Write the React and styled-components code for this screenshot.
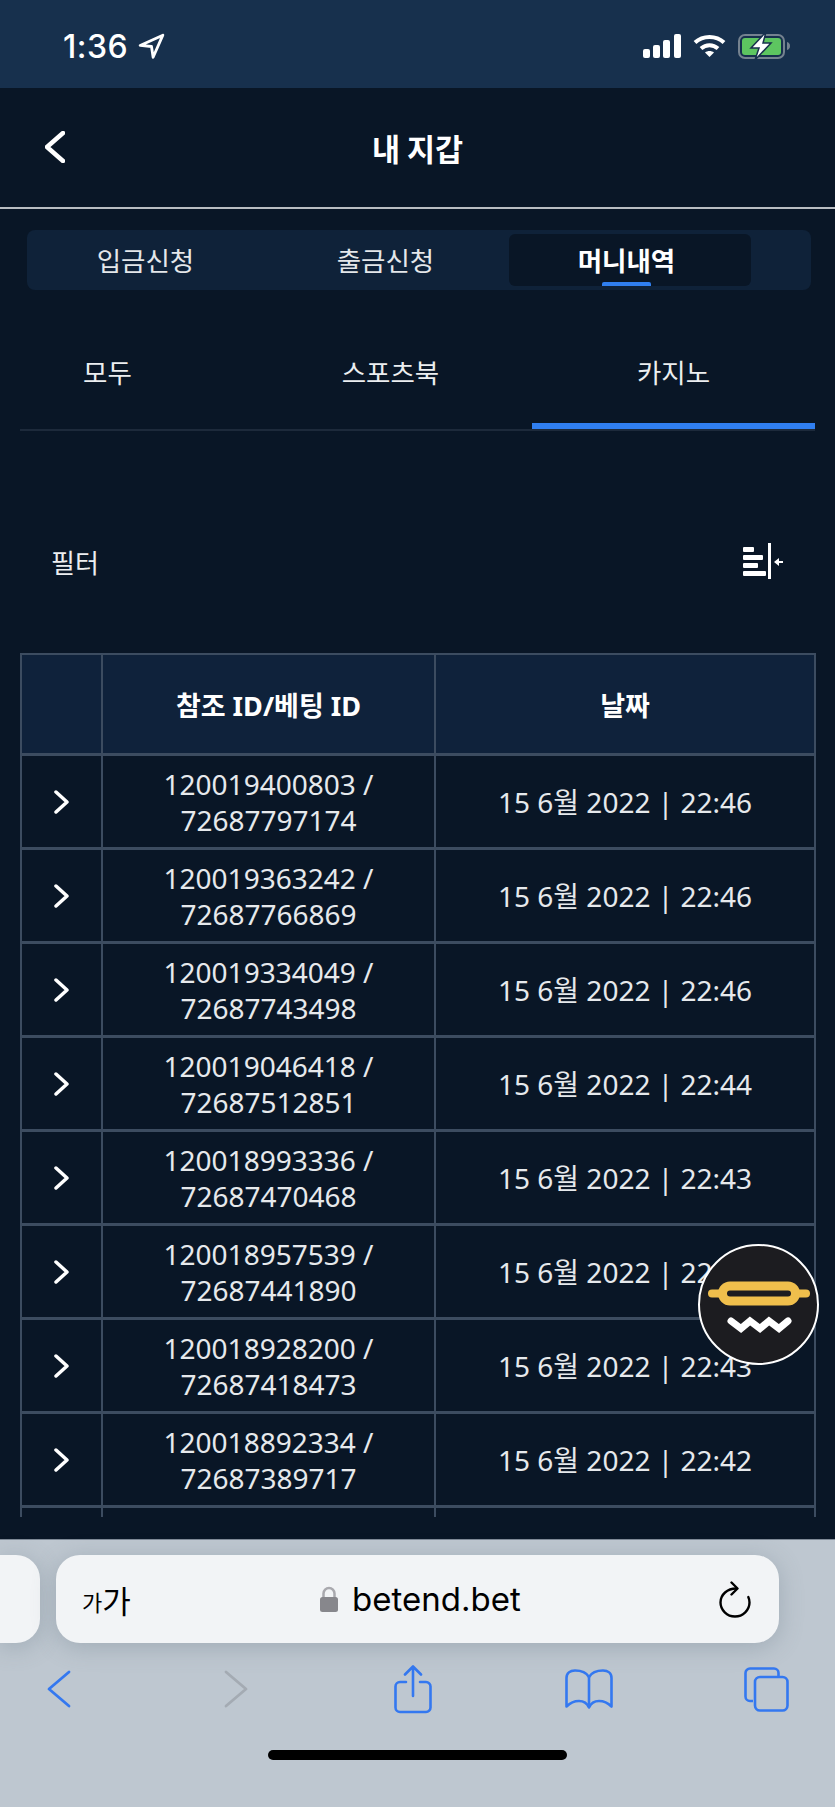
import React from 'react'
import styled, { createGlobalStyle } from 'styled-components'

const GlobalStyle = createGlobalStyle`
  html, body {
    margin: 0;
    padding: 0;
    background: #091626;
  }
  * {
    box-sizing: border-box;
  }
`

const Page = styled.div`
  position: relative;
  width: 835px;
  height: 1807px;
  overflow: hidden;
  background: #091626;
  color: #fff;
  font-family: "Noto Sans", "Noto Sans CJK KR", sans-serif;
  display: flex;
  flex-direction: column;
`
const StatusBar = styled.div`
  height: 88px;
  flex: none;
  background: #17304d;
  display: flex;
  align-items: center;
  justify-content: space-between;
  padding: 4px 43px 0 63px;
`
const Clock = styled.div`
  display: flex;
  align-items: center;
  gap: 10px;
  font-family: Inter, sans-serif;
  font-size: 32px;
  font-weight: 500;
  letter-spacing: 0.5px;
`
const StatusIcons = styled.div`
  display: flex;
  align-items: center;
  gap: 12px;
`
const Header = styled.header`
  height: 121px;
  flex: none;
  position: relative;
  display: flex;
  align-items: center;
  justify-content: center;
  border-bottom: 2px solid #b9bdc2;
`
const BackButton = styled.div`
  position: absolute;
  left: 45px;
  top: 43px;
  display: flex;
`
const Title = styled.h1`
  margin: 0;
  font-family: "Noto Sans CJK KR", sans-serif;
  font-size: 30.5px;
  font-weight: 700;
`
const PrimaryTabs = styled.div`
  height: 60px;
  flex: none;
  margin: 21px 24px 0 27px;
  padding: 4px 0;
  background: #0f2239;
  border-radius: 8px;
  display: flex;
`
const PrimaryTab = styled.div`
  position: relative;
  width: ${p => (p.$active ? '242px' : '240px')};
  margin-left: ${p => (p.$active ? '2px' : '0')};
  padding-right: ${p => (p.$active ? '7px' : '3px')};
  padding-bottom: 2px;
  display: flex;
  align-items: center;
  justify-content: center;
  font-family: "Noto Sans CJK KR", sans-serif;
  font-size: 26.5px;
  font-weight: ${p => (p.$active ? 700 : 400)};
  color: ${p => (p.$active ? '#fff' : '#e4e7ea')};
  background: ${p => (p.$active ? '#091626' : 'transparent')};
  border-radius: 6px;
`
const ActiveMark = styled.span`
  position: absolute;
  left: 93px;
  bottom: 0;
  width: 49px;
  height: 4px;
  border-radius: 2px 2px 0 0;
  background: #307ff0;
`
const SecondaryTabs = styled.div`
  height: 81px;
  flex: none;
  margin: 60px 20px 0;
  border-bottom: 2px solid #1d2a3b;
  display: flex;
  justify-content: flex-end;
  overflow: hidden;
`
const SecondaryTab = styled.div`
  flex: none;
  width: 283px;
  height: 79px;
  padding-bottom: 30px;
  display: flex;
  align-items: center;
  justify-content: center;
  font-family: "Noto Sans CJK KR", sans-serif;
  font-size: 26.5px;
  color: #eceef0;
  border-bottom: 6px solid ${p => (p.$active ? '#307ff0' : 'transparent')};
`
const FilterRow = styled.div`
  height: 40px;
  flex: none;
  margin-top: 110px;
  padding: 0 52px 0 51px;
  display: flex;
  align-items: center;
  justify-content: space-between;
  font-family: "Noto Sans CJK KR", sans-serif;
  font-size: 26px;
  color: #eceef0;
`
const TableClip = styled.div`
  height: 864px;
  flex: none;
  margin: 72px 19px 0 20px;
  overflow: hidden;
`
const Table = styled.table`
  width: 796px;
  table-layout: fixed;
  border-collapse: separate;
  border-spacing: 0;
`
const HeadCell = styled.th`
  height: 100px;
  padding: 0;
  background: #0f223b;
  border: solid #3c4c60;
  border-width: 2px 2px 0 0;
  &:first-child {
    border-left-width: 2px;
  }
  font-size: 27px;
  font-weight: 700;
  color: #fff;
`
const Cell = styled.td`
  height: 94px;
  padding: 0;
  border: solid #3c4c60;
  border-width: 3px 2px 0 0;
  &:first-child {
    border-left-width: 2px;
  }
  text-align: center;
  font-size: 28px;
  line-height: 36px;
  color: #e6e9ec;
`
const Expander = styled.div`
  display: flex;
  justify-content: center;
`
const Spacer = styled.div`
  flex: 1;
`
const BrowserBar = styled.div`
  height: 268px;
  flex: none;
  background: #bec7d0;
  border-top: 1px solid #7f8a97;
  display: flex;
  flex-direction: column;
`
const AddressRow = styled.div`
  margin-top: 15px;
  display: flex;
  gap: 16px;
  height: 88px;
`
const TabStub = styled.div`
  width: 40px;
  background: #f2f4f6;
  border-radius: 0 24px 24px 0;
  box-shadow: 0 4px 24px rgba(90, 105, 120, 0.3);
`
const AddressBar = styled.div`
  position: relative;
  width: 723px;
  padding: 0 28px 0 26px;
  background: #f2f4f6;
  border-radius: 24px;
  box-shadow: 0 4px 24px rgba(90, 105, 120, 0.3);
  display: flex;
  align-items: center;
  justify-content: space-between;
  color: #000;
`
const TextSize = styled.div`
  display: flex;
  align-items: center;
  font-family: "Noto Sans CJK KR", sans-serif;
`
const SmallGlyph = styled.span`
  font-size: 22px;
  margin-top: 4px;
`
const BigGlyph = styled.span`
  font-size: 31px;
`
const Domain = styled.div`
  display: flex;
  align-items: center;
  gap: 13px;
  font-family: Inter, sans-serif;
  font-size: 33px;
  margin-right: 10px;
`
const NavRow = styled.div`
  margin-top: 21px;
  padding: 0 39px 0 29px;
  height: 50px;
  display: flex;
  justify-content: space-between;
  align-items: center;
`
const NavSlot = styled.div`
  width: 60px;
  display: flex;
  justify-content: center;
`
const HomeIndicator = styled.div`
  width: 299px;
  height: 10px;
  margin: 36px auto 0;
  border-radius: 5px;
  background: #000;
`
const ChatBubble = styled.div`
  position: absolute;
  left: 698px;
  top: 1244px;
  width: 121px;
  height: 121px;
  display: flex;
`

const rows = [
  ['120019400803', '72687797174', '22:46'],
  ['120019363242', '72687766869', '22:46'],
  ['120019334049', '72687743498', '22:46'],
  ['120019046418', '72687512851', '22:44'],
  ['120018993336', '72687470468', '22:43'],
  ['120018957539', '72687441890', '22:43'],
  ['120018928200', '72687418473', '22:43'],
  ['120018892334', '72687389717', '22:42'],
  ['', '', ''],
]

const LocationArrow = () => (
  <svg width="27" height="27" viewBox="0 0 25 25" fill="none">
    <path d="M23 2L2 11.5l10.5 1 1.5 10L23 2z" stroke="#fff" strokeWidth="2.6" strokeLinejoin="round" />
  </svg>
)

const Signal = () => (
  <svg width="38" height="24" viewBox="0 0 38 24" fill="#fff">
    <rect x="0" y="15" width="7" height="9" rx="2" />
    <rect x="10" y="11" width="7" height="13" rx="2" />
    <rect x="20" y="6" width="7" height="18" rx="2" />
    <rect x="31" y="0" width="7" height="24" rx="2" />
  </svg>
)

const Wifi = () => (
  <svg width="33" height="24" viewBox="0 0 33 24" fill="none" stroke="#fff" strokeWidth="4">
    <path d="M2 8.5C10 1 23 1 31 8.5" />
    <path d="M8 14.5c5-4.500 12-4.500 17 0" />
    <path d="M16.500 23l-4.500-4.500c2.500-2 6.500-2 9 0z" fill="#fff" stroke="none" />
  </svg>
)

const Battery = () => (
  <svg width="54" height="28" viewBox="0 0 54 28" fill="none">
    <rect x="1" y="3" width="45" height="23" rx="6" stroke="#75828f" strokeWidth="2" />
    <rect x="4" y="6" width="39" height="17" rx="3" fill="#5dc560" />
    <path d="M49 10c2 .5 3 2 3 4s-1 3.500-3 4z" fill="#75828f" />
    <path d="M28 0L13 16h8l-4 12 16-17h-8l3-11z" fill="#fff" stroke="#17304d" strokeWidth="1.5" />
  </svg>
)

const Chevron = ({ dir = 'left', w = 20, h = 32, color = '#fff', sw = 4 }) => (
  <svg width={w} height={h} viewBox={`0 0 ${w} ${h}`} fill="none">
    <path
      d={dir === 'left'
        ? `M${w - 2} 2L2 ${h / 2}l${w - 4} ${h / 2 - 2}`
        : `M2 2l${w - 4} ${h / 2 - 2}L2 ${h - 2}`}
      stroke={color}
      strokeWidth={sw}
      strokeLinecap="round"
      strokeLinejoin="round"
    />
  </svg>
)

const CollapseIcon = () => (
  <svg width="40" height="36" viewBox="0 0 40 36" fill="#fff">
    <rect x="0" y="4" width="11" height="5" rx="1" />
    <rect x="0" y="12" width="20" height="5" rx="1" />
    <rect x="0" y="20" width="15" height="5" rx="1" />
    <rect x="0" y="28" width="23" height="5" rx="1" />
    <rect x="25" y="0" width="3" height="36" />
    <path d="M31 19l5-4v3h4v2h-4v3z" />
  </svg>
)

const Lock = () => (
  <svg width="20" height="26" viewBox="0 0 20 26" fill="none">
    <path d="M4.500 12V7.500a5.500 5.500 0 0 1 11 0V12" stroke="#a9a9ae" strokeWidth="2.500" />
    <rect x="1" y="11" width="18" height="15" rx="2.500" fill="#87878c" />
  </svg>
)

const Reload = () => (
  <svg width="32" height="37" viewBox="0 0 32 37" fill="none" stroke="#000" strokeWidth="2.400" strokeLinecap="round" strokeLinejoin="round">
    <path d="M17 7.500C8.500 7.500 1.500 13.500 1.500 21.500c0 7.500 6.500 14 14.500 14s14.500-6.500 14.500-14c0-2-.4-3.800-1.200-5.500" />
    <path d="M12.500 1.500l6 6-6 6" />
  </svg>
)

const Share = () => (
  <svg width="38" height="49" viewBox="0 0 38 49" fill="none" stroke="#3478f0" strokeWidth="2.600" strokeLinecap="round" strokeLinejoin="round">
    <path d="M12 17H6a4.500 4.500 0 0 0-4.500 4.500v21A4.500 4.500 0 0 0 6 47h26a4.500 4.500 0 0 0 4.500-4.500v-21A4.500 4.500 0 0 0 32 17h-6" />
    <path d="M19 31V2M11 9.500L19 1.500l8 8" />
  </svg>
)

const Book = () => (
  <svg width="48" height="40" viewBox="0 0 48 40" fill="none" stroke="#3478f0" strokeWidth="2.600" strokeLinejoin="round">
    <path d="M24 8C21 3 16 1.500 10 1.500 5 1.500 1.500 4 1.500 9v28.500C6 33 10 32 14 32c4 0 8 2 10 6.500C26 34 30 32 34 32c4 0 8 1 12.500 5.500V9c0-5-3.500-7.500-8.500-7.500C32 1.500 27 3 24 8z" />
    <path d="M24 8v30" />
  </svg>
)

const Tabs = () => (
  <svg width="45" height="45" viewBox="0 0 45 45" fill="none" stroke="#3478f0" strokeWidth="2.600">
    <path d="M9 34H6a4.500 4.500 0 0 1-4.500-4.500V6A4.500 4.500 0 0 1 6 1.500h24A4.500 4.500 0 0 1 34.500 6v3" />
    <rect x="11" y="10" width="32.500" height="33.500" rx="5" />
  </svg>
)

const BubbleLogo = () => (
  <svg width="121" height="121" viewBox="0 0 121 121">
    <circle cx="60.500" cy="60.500" r="59.500" fill="#1c1c20" stroke="#fff" strokeWidth="2" />
    <rect x="10" y="45.500" width="102" height="8" rx="4" fill="#f0bf4c" />
    <rect x="20" y="37.500" width="82" height="24" rx="12" fill="#f0bf4c" />
    <rect x="29" y="46.500" width="64" height="6" rx="3" fill="#1c1c20" />
    <path d="M33 77l10 7.500 9-7.500 10 7.500 9-7.500 10 7.500 9-7.500" fill="none" stroke="#fff" strokeWidth="7" strokeLinecap="round" />
  </svg>
)

export default function App() {
  return (
    <Page>
      <GlobalStyle />
      <StatusBar>
        <Clock>
          1:36
          <LocationArrow />
        </Clock>
        <StatusIcons>
          <Signal />
          <Wifi />
          <Battery />
        </StatusIcons>
      </StatusBar>
      <Header>
        <BackButton>
          <Chevron w={20} h={32} sw={4.500} />
        </BackButton>
        <Title>내 지갑</Title>
      </Header>
      <PrimaryTabs>
        <PrimaryTab>입금신청</PrimaryTab>
        <PrimaryTab>출금신청</PrimaryTab>
        <PrimaryTab $active>
          머니내역
          <ActiveMark />
        </PrimaryTab>
      </PrimaryTabs>
      <SecondaryTabs>
        <SecondaryTab>모두</SecondaryTab>
        <SecondaryTab>스포츠북</SecondaryTab>
        <SecondaryTab $active>카지노</SecondaryTab>
      </SecondaryTabs>
      <FilterRow>
        필터
        <CollapseIcon />
      </FilterRow>
      <TableClip>
        <Table>
          <colgroup>
            <col width="83" />
            <col width="333" />
            <col width="380" />
          </colgroup>
          <thead>
            <tr>
              <HeadCell />
              <HeadCell>참조 ID/베팅 ID</HeadCell>
              <HeadCell>날짜</HeadCell>
            </tr>
          </thead>
          <tbody>
            {rows.map((row, i) => (
              <tr key={i}>
                <Cell>
                  {row[0] && (
                    <Expander>
                      <Chevron dir="right" w={15} h={24} sw={3.500} />
                    </Expander>
                  )}
                </Cell>
                <Cell>
                  {row[0] && (
                    <>
                      {row[0]} /<br />
                      {row[1]}
                    </>
                  )}
                </Cell>
                <Cell>{row[0] && `15 6월 2022 | ${row[2]}`}</Cell>
              </tr>
            ))}
          </tbody>
        </Table>
      </TableClip>
      <Spacer />
      <BrowserBar>
        <AddressRow>
          <TabStub />
          <AddressBar>
            <TextSize>
              <SmallGlyph>가</SmallGlyph>
              <BigGlyph>가</BigGlyph>
            </TextSize>
            <Domain>
              <Lock />
              betend.bet
            </Domain>
            <Reload />
          </AddressBar>
        </AddressRow>
        <NavRow>
          <NavSlot>
            <Chevron w={24} h={38} color="#3478f0" sw={2.800} />
          </NavSlot>
          <NavSlot>
            <Chevron dir="right" w={24} h={38} color="#a4abb3" sw={2.800} />
          </NavSlot>
          <NavSlot>
            <Share />
          </NavSlot>
          <NavSlot>
            <Book />
          </NavSlot>
          <NavSlot>
            <Tabs />
          </NavSlot>
        </NavRow>
        <HomeIndicator />
      </BrowserBar>
      <ChatBubble>
        <BubbleLogo />
      </ChatBubble>
    </Page>
  )
}
